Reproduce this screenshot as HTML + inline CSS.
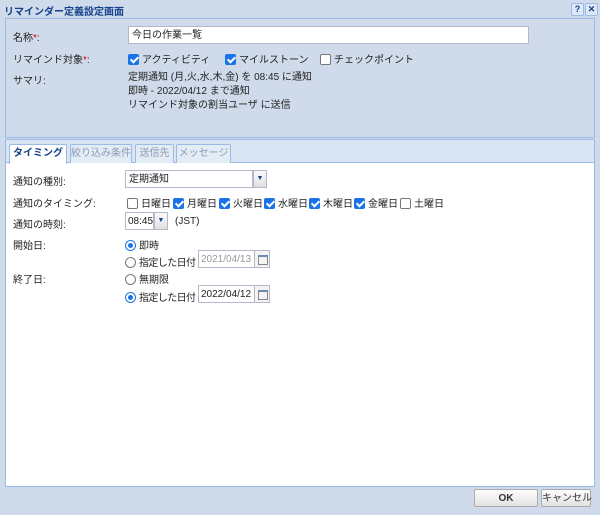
<!DOCTYPE html>
<html><head><meta charset="utf-8"><style>
*{box-sizing:border-box;margin:0;padding:0}
body{width:600px;height:515px;background:#cfdbea;font-family:"Liberation Sans","Noto Sans CJK JP",sans-serif;font-size:10px;color:#222;position:relative;overflow:hidden}
.abs{position:absolute;white-space:nowrap}
.title{left:4px;top:3px;font-weight:bold;color:#15428b;font-size:10px}
.tb{width:13px;height:13px;border:1px solid #99bbe8;background:#dfe8f6;color:#15428b;font-size:9px;font-weight:bold;text-align:center;line-height:11px;border-radius:2px}
.top{left:5px;top:18px;width:590px;height:120px;border:1px solid #99bbe8;background:#cfdbea}
.tabp{left:5px;top:139px;width:590px;height:348px;border:1px solid #99bbe8;background:#fff}
.strip{left:0;top:0;width:588px;height:23px;background:#dae5f3;border-bottom:1px solid #99bbe8}
.tab{top:4px;height:19px;border:1px solid #99bbe8;border-bottom:none;background:#e3ebf5;color:#8a9bb5;text-align:center;line-height:17px;border-radius:2px 2px 0 0;overflow:hidden}
.tab.on{background:#fff;color:#15428b;font-weight:bold;height:20px}
.inp{border:1px solid #b5b8c8;background:#fff;height:18px;line-height:18px;padding-left:3px;overflow:hidden}
.cb{display:inline-block;width:11px;height:11px;border:1px solid #777;border-radius:2px;vertical-align:-2px;margin-right:3px;background:#fff}
.cb.on{background:#1a73e8;border-color:#1a73e8;position:relative}
.cb.on:after{content:"";position:absolute;left:3px;top:0px;width:3px;height:6px;border:solid #fff;border-width:0 2px 2px 0;transform:rotate(45deg)}
.rd{display:inline-block;width:11px;height:11px;border:1px solid #777;border-radius:50%;vertical-align:-2px;margin-right:3px;background:#fff;position:relative}
.rd.on{border-color:#1a73e8}
.rd.on:after{content:"";position:absolute;left:2px;top:2px;width:5px;height:5px;border-radius:50%;background:#1a73e8}
.dd{border:1px solid #b5b8c8;background:linear-gradient(#fafafa,#e0e0e0);width:14px;height:18px;text-align:center;color:#15428b;font-size:7px;line-height:16px}
.cal{width:16px;height:18px;border:1px solid #b5b8c8;background:#f3f3f3}
.cal:after{content:"";position:absolute;left:3px;top:4px;width:8px;height:7px;border:1px solid #888;border-top:2px solid #6a8ab5}
.btn{top:489px;height:18px;border:1px solid #aaa;border-radius:2px;background:linear-gradient(#fdfdfd,#e2e2e2);text-align:center;line-height:17px;color:#333}
.red{color:#d00}
.tight{letter-spacing:-0.6px}
</style></head><body>
<div class="abs title">リマインダー定義設定画面</div>
<div class="abs tb" style="left:571px;top:3px">?</div>
<div class="abs tb" style="left:585px;top:3px">✕</div>
<div class="abs top"></div>
<div class="abs" style="left:13px;top:29px">名称<span class="red">*</span>:</div>
<div class="abs inp" style="left:128px;top:26px;width:401px">今日の作業一覧</div>
<div class="abs" style="left:13px;top:51px">リマインド対象<span class="red">*</span>:</div>
<div class="abs" style="left:128px;top:51px"><span class="cb on"></span>アクティビティ</div>
<div class="abs" style="left:225px;top:51px"><span class="cb on"></span>マイルストーン</div>
<div class="abs" style="left:320px;top:51px"><span class="cb"></span>チェックポイント</div>
<div class="abs" style="left:13px;top:72px">サマリ:</div>
<div class="abs" style="left:128px;top:71px;line-height:14px">定期通知 (月,火,水,木,金) を 08:45 に通知<br>即時 - 2022/04/12 まで通知<br>リマインド対象の割当ユーザ に送信</div>
<div class="abs tabp">
 <div class="abs strip"></div>
 <div class="abs tab on" style="left:3px;width:58px">タイミング</div>
 <div class="abs tab" style="left:64px;width:62px">絞り込み条件</div>
 <div class="abs tab" style="left:129px;width:39px">送信先</div>
 <div class="abs tab" style="left:170px;width:55px">メッセージ</div>
</div>
<div class="abs" style="left:13px;top:173px">通知の種別:</div>
<div class="abs inp" style="left:125px;top:170px;width:128px">定期通知</div>
<div class="abs dd" style="left:253px;top:170px">▼</div>
<div class="abs" style="left:13px;top:195px">通知のタイミング:</div>
<div class="abs" style="left:127px;top:195px"><span class="cb"></span>日曜日</div>
<div class="abs" style="left:173px;top:195px"><span class="cb on"></span>月曜日</div>
<div class="abs" style="left:219px;top:195px"><span class="cb on"></span>火曜日</div>
<div class="abs" style="left:264px;top:195px"><span class="cb on"></span>水曜日</div>
<div class="abs" style="left:309px;top:195px"><span class="cb on"></span>木曜日</div>
<div class="abs" style="left:354px;top:195px"><span class="cb on"></span>金曜日</div>
<div class="abs" style="left:400px;top:195px"><span class="cb"></span>土曜日</div>
<div class="abs" style="left:13px;top:216px">通知の時刻:</div>
<div class="abs inp" style="left:125px;top:212px;width:29px;padding-left:2px">08:45</div>
<div class="abs dd" style="left:154px;top:212px">▼</div>
<div class="abs" style="left:175px;top:216px">(JST)</div>
<div class="abs" style="left:13px;top:237px">開始日:</div>
<div class="abs" style="left:125px;top:237px"><span class="rd on"></span>即時</div>
<div class="abs tight" style="left:125px;top:254px"><span class="rd"></span>指定した日付</div>
<div class="abs inp" style="left:198px;top:250px;width:57px;color:#999;padding-left:2px">2021/04/13</div>
<div class="abs cal" style="left:254px;top:250px"></div>
<div class="abs" style="left:13px;top:271px">終了日:</div>
<div class="abs" style="left:125px;top:271px"><span class="rd"></span>無期限</div>
<div class="abs tight" style="left:125px;top:289px"><span class="rd on"></span>指定した日付</div>
<div class="abs inp" style="left:198px;top:285px;width:57px;padding-left:2px">2022/04/12</div>
<div class="abs cal" style="left:254px;top:285px"></div>
<div class="abs btn" style="left:474px;width:64px;font-weight:bold">OK</div>
<div class="abs btn" style="left:541px;width:50px">キャンセル</div>
</body></html>
